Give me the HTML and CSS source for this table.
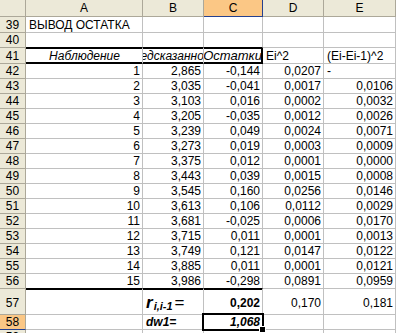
FILE: index.html
```html
<!DOCTYPE html>
<html lang="ru">

<head>
  <meta charset="UTF-8">
  <meta name="viewport" content="width=device-width, initial-scale=1.0">
  <title>Вывод остатка</title>
  <link rel="stylesheet" href="styles.css">
</head>

<body>
  <div class="sheet">
    <!-- заголовки столбцов -->
    <div class="col corner"></div>
    <div class="col">A</div>
    <div class="col">B</div>
    <div class="col col--sel">C</div>
    <div class="col">D</div>
    <div class="col">E</div>

    <div class="rh">39</div>
    <div class="c">ВЫВОД ОСТАТКА</div>
    <div class="c"></div>
    <div class="c"></div>
    <div class="c"></div>
    <div class="c"></div>

    <div class="rh">40</div>
    <div class="c c--line"></div>
    <div class="c c--line"></div>
    <div class="c c--line"></div>
    <div class="c"></div>
    <div class="c"></div>

    <div class="rh">41</div>
    <div class="c c--box mid it">Наблюдение</div>
    <div class="c c--box mid it">Предсказанное Y</div>
    <div class="c c--box c--box-end mid it wide">Остатки</div>
    <div class="c">Ei^2</div>
    <div class="c">(Ei-Ei-1)^2</div>

    <div class="rh">42</div>
    <div class="c num">1</div>
    <div class="c num">2,865</div>
    <div class="c num">-0,144</div>
    <div class="c num">0,0207</div>
    <div class="c">-</div>

    <div class="rh">43</div>
    <div class="c num">2</div>
    <div class="c num">3,035</div>
    <div class="c num">-0,041</div>
    <div class="c num">0,0017</div>
    <div class="c num">0,0106</div>

    <div class="rh">44</div>
    <div class="c num">3</div>
    <div class="c num">3,103</div>
    <div class="c num">0,016</div>
    <div class="c num">0,0002</div>
    <div class="c num">0,0032</div>

    <div class="rh">45</div>
    <div class="c num">4</div>
    <div class="c num">3,205</div>
    <div class="c num">-0,035</div>
    <div class="c num">0,0012</div>
    <div class="c num">0,0026</div>

    <div class="rh">46</div>
    <div class="c num">5</div>
    <div class="c num">3,239</div>
    <div class="c num">0,049</div>
    <div class="c num">0,0024</div>
    <div class="c num">0,0071</div>

    <div class="rh">47</div>
    <div class="c num">6</div>
    <div class="c num">3,273</div>
    <div class="c num">0,019</div>
    <div class="c num">0,0003</div>
    <div class="c num">0,0009</div>

    <div class="rh">48</div>
    <div class="c num">7</div>
    <div class="c num">3,375</div>
    <div class="c num">0,012</div>
    <div class="c num">0,0001</div>
    <div class="c num">0,0000</div>

    <div class="rh">49</div>
    <div class="c num">8</div>
    <div class="c num">3,443</div>
    <div class="c num">0,039</div>
    <div class="c num">0,0015</div>
    <div class="c num">0,0008</div>

    <div class="rh">50</div>
    <div class="c num">9</div>
    <div class="c num">3,545</div>
    <div class="c num">0,160</div>
    <div class="c num">0,0256</div>
    <div class="c num">0,0146</div>

    <div class="rh">51</div>
    <div class="c num">10</div>
    <div class="c num">3,613</div>
    <div class="c num">0,106</div>
    <div class="c num">0,0112</div>
    <div class="c num">0,0029</div>

    <div class="rh">52</div>
    <div class="c num">11</div>
    <div class="c num">3,681</div>
    <div class="c num">-0,025</div>
    <div class="c num">0,0006</div>
    <div class="c num">0,0170</div>

    <div class="rh">53</div>
    <div class="c num">12</div>
    <div class="c num">3,715</div>
    <div class="c num">0,011</div>
    <div class="c num">0,0001</div>
    <div class="c num">0,0013</div>

    <div class="rh">54</div>
    <div class="c num">13</div>
    <div class="c num">3,749</div>
    <div class="c num">0,121</div>
    <div class="c num">0,0147</div>
    <div class="c num">0,0122</div>

    <div class="rh">55</div>
    <div class="c num">14</div>
    <div class="c num">3,885</div>
    <div class="c num">0,011</div>
    <div class="c num">0,0001</div>
    <div class="c num">0,0121</div>

    <div class="rh">56</div>
    <div class="c c--line num">15</div>
    <div class="c c--line num">3,986</div>
    <div class="c c--line num">-0,298</div>
    <div class="c num">0,0891</div>
    <div class="c num">0,0959</div>

    <div class="rh rh--tall">57</div>
    <div class="c c--after"></div>
    <div class="c c--after tall bi"><span class="r">r</span><span class="sub">i,i-1</span><span class="eq">=</span></div>
    <div class="c c--after tall num b">0,202</div>
    <div class="c tall num">0,170</div>
    <div class="c tall num">0,181</div>

    <div class="rh rh--sel">58</div>
    <div class="c"></div>
    <div class="c bi">dw1=</div>
    <div class="c c--active num bi">1,068</div>
    <div class="c"></div>
    <div class="c"></div>

    <div class="rh">59</div>
    <div class="c"></div>
    <div class="c"></div>
    <div class="c"></div>
    <div class="c"></div>
    <div class="c"></div>
  </div>
</body>

</html>
```

FILE: styles.css
```css
body {
  margin: 0;
  overflow: hidden;
  background: #fff;
  font-family: "Liberation Sans", Arial, sans-serif;
  font-size: 12px;
  color: #000;
}

/* лист: столбец номеров строк + A..E */
.sheet {
  display: grid;
  grid-template-columns: 26px 117px 61px 59px 61px 72px;
  grid-template-rows: 17px 16px 15px 16px repeat(15, 15px) 26px 15px 15px;
}

.sheet > div {
  box-sizing: border-box;
  display: flex;
  white-space: nowrap;
  overflow: hidden;
}

/* заголовки */
.col,
.rh {
  background: #ece9d8;
  border-right: 1px solid #aca899;
  border-bottom: 1px solid #aca899;
  justify-content: center;
  align-items: center;
  line-height: 14px;
}

.col--sel {
  background: #fbc785;
  border-right-color: #25408f;
  border-bottom-color: #25408f;
}

.rh--sel {
  background: #fbc785;
  border-bottom-color: #25408f;
}

.rh--tall {
  align-items: flex-end;
  padding-bottom: 4px;
}

/* ячейки */
.c {
  border-right: 1px solid #c0c0c0;
  border-bottom: 1px solid #c0c0c0;
  padding: 0 2px 0 3px;
  align-items: flex-end;
  line-height: 14px;
}

.num {
  justify-content: flex-end;
}

.mid {
  justify-content: center;
}

.it {
  font-style: italic;
}

.wide {
  font-size: 13px;
  padding: 0 1px 0 0;
}

.b {
  font-weight: bold;
}

.bi {
  font-weight: bold;
  font-style: italic;
}

/* жирные линии таблицы */
.c--line {
  border-bottom-color: #000;
}

.c--box {
  border-bottom-color: #000;
  box-shadow: inset 0 1px 0 #000, inset 0 -1px 0 #000;
}

.c--box-end {
  border-right-color: #000;
  box-shadow: inset 0 1px 0 #000, inset 0 -1px 0 #000, inset -1px 0 0 #000;
}

.c--after {
  box-shadow: inset 0 1px 0 #000;
}

.tall {
  padding-bottom: 4px;
}

.r {
  font-size: 17px;
  line-height: 14px;
}

.sub {
  font-size: 11px;
  position: relative;
  top: 3px;
  margin-left: 1px;
}

.eq {
  font-size: 17px;
  font-weight: normal;
  font-style: normal;
  margin-left: 2px;
  line-height: 14px;
}

/* активная ячейка */
.sheet > .c--active {
  position: relative;
  overflow: visible;
}

.c--active::before {
  content: "";
  position: absolute;
  left: -2px;
  top: -2px;
  right: -2px;
  bottom: -2px;
  border: 2px solid #000;
}

.c--active::after {
  content: "";
  position: absolute;
  right: -4px;
  bottom: -4px;
  width: 5px;
  height: 5px;
  background: #000;
  border: 1px solid #fff;
  z-index: 2;
}
```
